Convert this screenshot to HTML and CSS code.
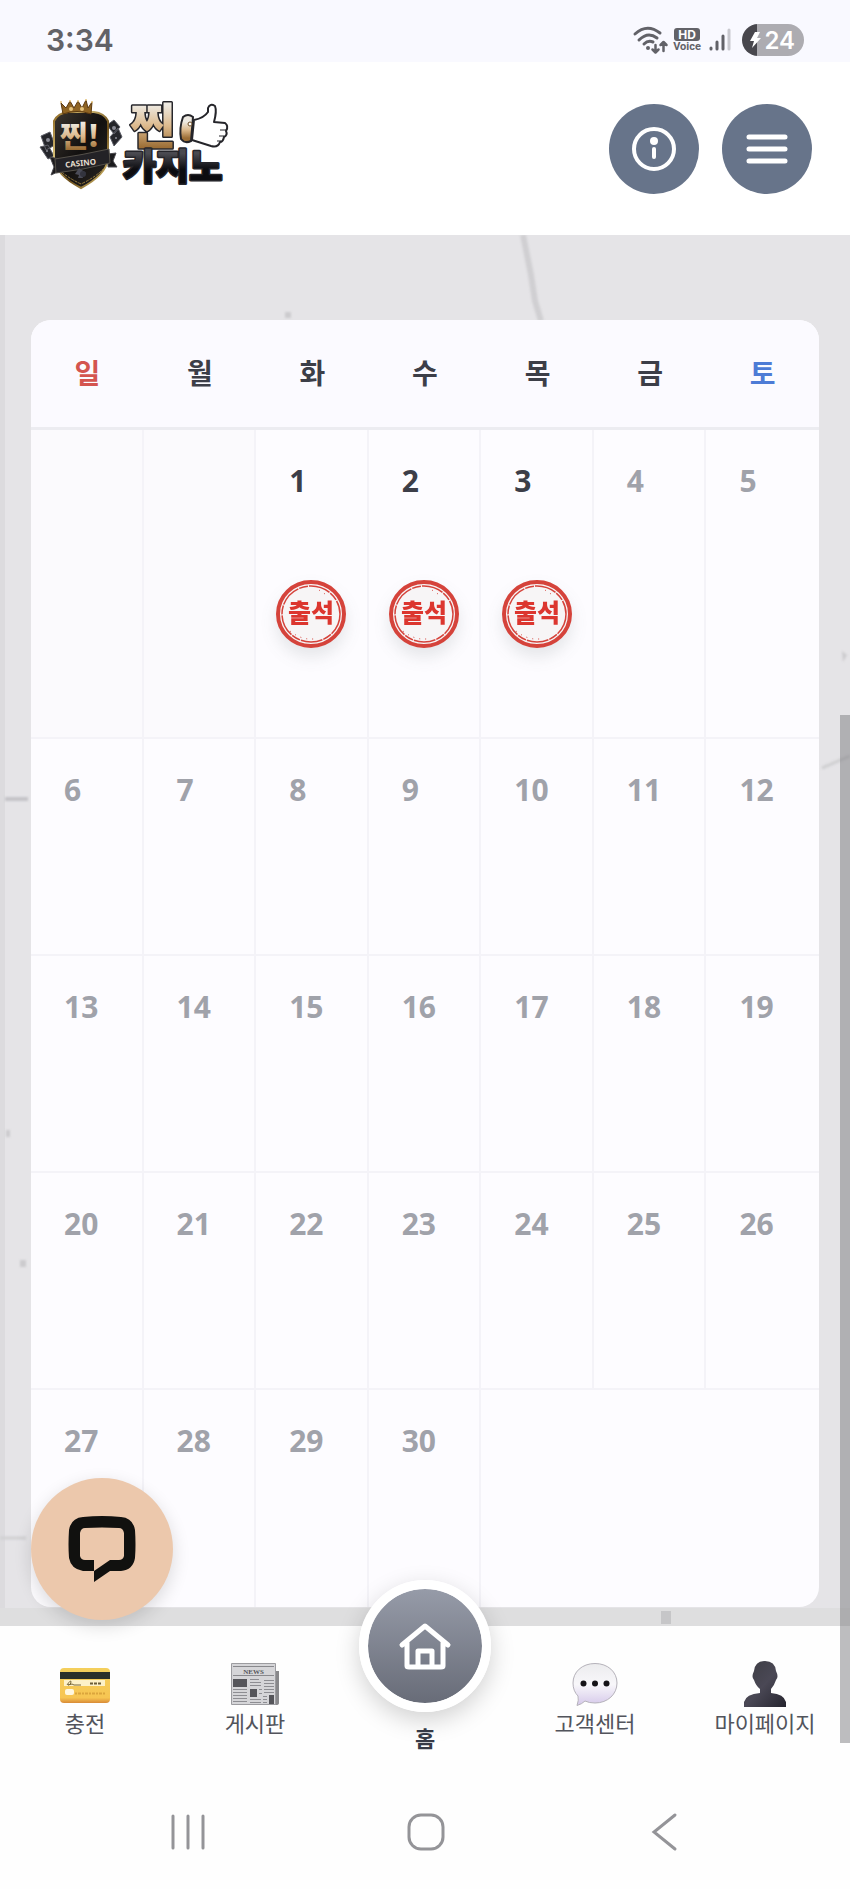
FILE: index.html
```html
<!DOCTYPE html>
<html lang="ko">
<head>
<meta charset="utf-8">
<meta name="viewport" content="width=device-width, initial-scale=1">
<title>출석 달력</title>
<link rel="stylesheet" href="styles.css">
</head>
<body>
<div class="status">
  <span class="clock">3:34</span>
  <div class="status-icons">
    <svg class="wifi" width="34" height="28" viewBox="0 0 34 28" fill="none" stroke="#626268" stroke-width="3" stroke-linecap="round" stroke-linejoin="round" aria-hidden="true">
      <path d="M2 8Q14-3 27 7M6 14Q15 5 24 12M11 18Q15 14 20 16"/>
      <circle cx="15" cy="22" r="2" fill="#626268" stroke="none"/>
      <path stroke-width="2.500" d="M22.500 19v7M19.500 23.500l3 3 3-3M30.500 25v-8M27.500 19l3-3 3 3"/>
    </svg>
    <span class="voice"><b>HD</b><small>Voice</small></span>
    <svg class="signal" width="22" height="24" viewBox="0 0 22 24" stroke-width="3" stroke-linecap="round" stroke="#626268" aria-hidden="true">
      <path d="M2 20v1M8 14v7M14 8v13"/><path stroke="#c9c9cf" d="M20 2v19"/>
    </svg>
    <span class="battery">
      <svg width="12" height="18" viewBox="0 0 12 18" aria-hidden="true"><path fill="#fff" d="M6 1h5L8 7h4L3 17l2-7H1z"/></svg>
      <span>24</span>
    </span>
  </div>
</div>

<header class="header">
  <a href="#" class="logo" aria-label="찐 카지노">
    <svg width="190" height="104" viewBox="0 0 190 104">
      <defs>
        <linearGradient id="gold" x1="0" y1="0" x2="0" y2="1"><stop offset="0.250" stop-color="#eeeae2"/><stop offset="0.550" stop-color="#dcb98c"/><stop offset="0.850" stop-color="#9c6e36"/></linearGradient>
        <linearGradient id="rim" x1="0" y1="0" x2="1" y2="1"><stop offset="0" stop-color="#8a641f"/><stop offset="0.300" stop-color="#d9c27a"/><stop offset="0.600" stop-color="#6a4c18"/><stop offset="1" stop-color="#e9cf7c"/></linearGradient>
        <linearGradient id="body" x1="0" y1="0" x2="1" y2="1"><stop offset="0" stop-color="#3c3630"/><stop offset="0.500" stop-color="#12100f"/><stop offset="1" stop-color="#2b2724"/></linearGradient>
        <linearGradient id="coal" x1="0" y1="0" x2="0" y2="1"><stop offset="0.300" stop-color="#4a4a50"/><stop offset="0.600" stop-color="#0c0c10"/></linearGradient>
      </defs>
      <g fill="#25262b" stroke="#5c5d66" stroke-width="1">
        <path d="M1 39l9-4 5 13-9 5zM0 50l8-2 6 11-6 3z"/>
        <path d="M67 28l7-5 6 7-6 7zM70 40l8-9 4 9-8 9z"/>
      </g>
      <g fill="#8b8c96"><circle cx="8" cy="43" r="2"/><circle cx="7" cy="54" r="1"/><circle cx="74" cy="31" r="2"/><circle cx="76" cy="41" r="1"/></g>
      <path fill="url(#body)" stroke="url(#rim)" stroke-width="2" d="M14 24Q18 16 28 15H54Q64 16 68 24V62Q66 78 41 91Q16 78 14 62z"/>
      <path fill="none" stroke="#a1833f" stroke-width="1" stroke-dasharray="3 1" d="M19 72Q26 80 41 87Q56 80 63 72"/>
      <path fill="#8f6423" stroke="#5b3910" stroke-width="1" d="M23 17L21 6l5 5 4-7 4 7 4-7 4 7 4-8 2 8 4-6-1 12Q37 12 23 17z"/>
      <g fill="#e6c47c"><circle cx="21" cy="5" r="1"/><circle cx="30" cy="4" r="1"/><circle cx="38" cy="4" r="1"/><circle cx="46" cy="3" r="1"/><circle cx="52" cy="5" r="1"/><circle cx="31" cy="12" r="2"/><circle cx="42" cy="12" r="2"/></g>
      <text class="mark" x="20" y="50" font-size="30" fill="url(#gold)">찐!</text>
      <path fill="#1b1a1c" stroke="#4a494e" stroke-width="1" d="M10 60l9 2 1 12-9 4 3-8zM76 56l-8 1 0 13 9 0-4-6z"/>
      <path fill="#232226" stroke="#55514a" stroke-width="1" d="M15 62Q42 58 69 52L70 66Q43 73 16 76z"/>
      <text class="casino" x="25" y="69" font-size="8" fill="#e5ddcf" transform="rotate(-6 41 66)">CASINO</text>
      <path fill="#4b4c58" d="M39 71l-4 6 4 1-1 3h5l-1-3 4-2z"/>
      <circle cx="43" cy="77" r="3" fill="#33343e"/>
      <g stroke="#25252a" stroke-width="3" paint-order="stroke" stroke-linejoin="round">
        <text class="mark" x="90" y="47" font-size="49" fill="url(#gold)">찐</text>
        <text class="mark" x="83" y="83" font-size="36" fill="url(#coal)">카지노</text>
      </g>
      <path fill="url(#gold)" stroke="#25252a" stroke-width="2" d="M143 20Q148 16 153 20L151 44Q145 47 141 42Q139 31 143 20z"/>
      <circle cx="150" cy="27" r="2" fill="#fff" stroke="#6b4b25"/>
      <path fill="#fff" stroke="#25252a" stroke-width="2" stroke-linejoin="round" d="M154 23Q164 21 168 15L168 11Q170 6 175 9Q177 14 174 25L185 26Q189 29 186 34Q188 38 184 40Q183 45 180 45Q178 51 171 49L152 43z"/>
      <path fill="none" stroke="#25252a" stroke-width="1" d="M180 33h6M179 39h5M177 44h4"/>
    </svg>
  </a>
  <div class="header-actions">
    <button class="round" type="button" aria-label="안내">
      <svg width="44" height="44" viewBox="0 0 44 44" fill="none" stroke="#fff" stroke-width="4" stroke-linecap="round"><circle cx="22" cy="22" r="20"/><path d="M22 22v8"/><circle cx="22" cy="14" r="4" fill="#fff" stroke="none"/></svg>
    </button>
    <button class="round" type="button" aria-label="메뉴">
      <svg width="44" height="44" viewBox="0 0 44 44" fill="none" stroke="#fff" stroke-width="5" stroke-linecap="round"><path d="M4 10h36M4 22h36M4 34h36"/></svg>
    </button>
  </div>
</header>

<main class="main">
  <svg class="marble" viewBox="0 0 850 1392" preserveAspectRatio="xMidYMin slice" fill="none" aria-hidden="true">
    <path fill="#dcdbde" d="M0 0H5V1392H0z"/>
    <path fill="#dededf" d="M0 1373H850V1392H0z"/>
    <g class="veins">
      <path stroke="#d0cfd2" stroke-width="6" d="M523 0L527 20L531 40L535 66L541 86"/>
      <path stroke="#c4c3c8" stroke-width="4" d="M5 564H28"/>
      <path stroke="#d0d0d2" stroke-width="3" d="M0 1303H26M822 533L850 521"/>
      <path fill="#cccbce" d="M285 77h6v6h-6zM842 416l5 4-4 7zM20 1025h6v7h-6zM6 895h4v7h-4z"/>
    </g>
    <path fill="#c6c6c8" d="M661 1376h10v13h-10z"/>
  </svg>
  <section class="card">
    <table class="calendar">
      <thead>
        <tr><th class="sun" scope="col">일</th><th scope="col">월</th><th scope="col">화</th><th scope="col">수</th><th scope="col">목</th><th scope="col">금</th><th class="sat" scope="col">토</th></tr>
      </thead>
      <tbody>
        <tr class="tall">
          <td class="empty"></td><td class="empty"></td>
          <td class="done"><span>1</span><svg class="stamp" width="72" height="70" viewBox="0 0 72 70"><use href="#seal"/><text x="36" y="43">출석</text></svg></td>
          <td class="done"><span>2</span><svg class="stamp" width="72" height="70" viewBox="0 0 72 70"><use href="#seal"/><text x="36" y="43">출석</text></svg></td>
          <td class="done"><span>3</span><svg class="stamp" width="72" height="70" viewBox="0 0 72 70"><use href="#seal"/><text x="36" y="43">출석</text></svg></td>
          <td>4</td><td>5</td>
        </tr>
        <tr><td>6</td><td>7</td><td>8</td><td>9</td><td>10</td><td>11</td><td>12</td></tr>
        <tr><td>13</td><td>14</td><td>15</td><td>16</td><td>17</td><td>18</td><td>19</td></tr>
        <tr><td>20</td><td>21</td><td>22</td><td>23</td><td>24</td><td>25</td><td>26</td></tr>
        <tr><td>27</td><td>28</td><td>29</td><td>30</td><td colspan="3"></td></tr>
      </tbody>
    </table>
  </section>
  <button class="chat" type="button" aria-label="채팅 상담">
    <svg width="66" height="66" viewBox="0 0 66 66"><path fill="#11110f" fill-rule="evenodd" d="M14 1Q33-1 52 1Q64 2 66 14Q67 29 66 42Q64 54 52 55H41L25 66V55H14Q2 53 0 42Q-1 29 0 14Q2 2 14 1zM16 12Q12 12 11 17V40Q12 44 16 44H25V55L41 44H50Q54 44 55 40V17Q54 12 50 12Q33 11 16 12z"/></svg>
  </button>
</main>

<nav class="tabs" aria-label="하단 메뉴">
  <a class="tab" href="#">
    <svg width="50" height="48" viewBox="0 0 50 48" aria-hidden="true">
      <defs><linearGradient id="yellow" x1="0" y1="0" x2="0" y2="1"><stop offset="0" stop-color="#f4cf5c"/><stop offset="0.850" stop-color="#f7c552"/><stop offset="1" stop-color="#d88a36"/></linearGradient></defs>
      <rect y="8" width="50" height="35" rx="4" fill="url(#yellow)"/><path fill="#2b3029" d="M0 12h50v7H0z"/>
      <path fill="#fdf1c8" d="M4 20h41v6H4z"/><path fill="none" stroke="#77673a" d="M7 25q4-6 4-3t-3 3q5-2 6 0h7"/><path stroke="#6c5e3b" stroke-width="2" stroke-dasharray="3 1" d="M30 23.500h12"/>
      <rect x="5" y="29" width="9" height="6" rx="2" fill="#fff7df"/><path stroke="#dba53d" stroke-width="2" stroke-dasharray="2 1 3 1" d="M15 33.500h31"/>
    </svg>
    <span>충전</span>
  </a>
  <a class="tab" href="#">
    <svg width="50" height="48" viewBox="0 0 50 48" aria-hidden="true">
      <path fill="#88888b" d="M40 11h9v32q0 2-3 2H36z"/><path fill="#d5d5d8" stroke="#9c9ca0" d="M1.500 3.500h44v41h-44z"/>
      <path stroke="#88888c" d="M3 6.500h41M3 15.500h41"/>
      <text class="news" x="23.500" y="14">NEWS</text>
      <path fill="#55555a" d="M3 19h14v8H3zM20 29h7v8h-7zM39 35h5v9h-5z"/>
      <path stroke="#8d8d92" d="M3 29.500h14M3 32.500h14M3 35.500h14M3 38.500h14M3 41.500h14M20 19.500h9M20 22.500h11M20 25.500h11M29 29.500h3M29 33.500h3M20 39.500h11M20 42.500h11M34 20.500h10M34 23.500h10M34 26.500h10M34 29.500h10M34 32.500h10M33 36.500h4M33 39.500h4M33 42.500h4"/>
    </svg>
    <span>게시판</span>
  </a>
  <a class="tab home" href="#" aria-current="page">
    <span class="home-disc">
      <svg width="52" height="48" viewBox="0 0 52 48" fill="none" stroke="#fff" stroke-width="5" stroke-linecap="round" stroke-linejoin="round" aria-hidden="true"><path d="M3 23L26 4L49 23M8 21V44Q8 45 10 45H42Q44 45 44 44V21M19 44V29H33V44"/></svg>
    </span>
    <span>홈</span>
  </a>
  <a class="tab" href="#">
    <svg width="50" height="48" viewBox="0 0 50 48" aria-hidden="true">
      <defs><linearGradient id="bubble" x1="0" y1="0" x2="0" y2="1"><stop offset="0" stop-color="#ececee"/><stop offset="0.500" stop-color="#f8f7fa"/><stop offset="1" stop-color="#d5c8ea"/></linearGradient></defs>
      <path fill="url(#bubble)" stroke="#b5b2ba" d="M25 3.500C38 3.500 47 12 47 23S38 43 25 43Q19 43 15 41Q12 44 7 45.500Q9 40 8 36Q3 31 3 23C3 12 12 3.500 25 3.500z"/>
      <g fill="#151418"><circle cx="13.500" cy="23.500" r="3"/><circle cx="25" cy="23.500" r="3"/><circle cx="36.500" cy="23.500" r="3"/></g>
    </svg>
    <span>고객센터</span>
  </a>
  <a class="tab" href="#">
    <svg width="50" height="48" viewBox="0 0 50 48" aria-hidden="true">
      <defs><linearGradient id="bust" x1="0" y1="0" x2="1" y2="1"><stop offset="0" stop-color="#3c3c42"/><stop offset="0.500" stop-color="#4a4855"/><stop offset="1" stop-color="#25242e"/></linearGradient></defs>
      <path fill="url(#bust)" d="M25 1Q35 1 36 11Q39 17 36 20Q34 26 31 29V33Q44 34 46 42V47H4V42Q6 34 20 33V29Q16 26 14 20Q11 17 14 11Q15 1 25 1z"/>
    </svg>
    <span>마이페이지</span>
  </a>
</nav>

<div class="system">
  <button type="button" aria-label="최근 앱"><svg width="38" height="38" viewBox="0 0 38 38"><path d="M4 3v32M19 3v32M34 3v32"/></svg></button>
  <button type="button" aria-label="홈 화면"><svg width="38" height="38" viewBox="0 0 38 38"><rect x="2" y="2" width="34" height="34" rx="12"/></svg></button>
  <button type="button" aria-label="뒤로"><svg width="38" height="38" viewBox="0 0 38 38"><path d="M30 2L9 19L30 36"/></svg></button>
</div>
<div class="thumb"></div>

<svg class="defs" width="0" height="0" aria-hidden="true">
  <defs>
    <g id="seal">
      <ellipse cx="36" cy="35" rx="33" ry="32" fill="#f7f5f6" stroke="#d5433b" stroke-width="4"/>
      <ellipse cx="36" cy="35" rx="29" ry="28" fill="none" stroke="#d5433b" stroke-width="1.500" stroke-dasharray="22 1 9 1"/>
      <path stroke="#d5433b" stroke-width="1" stroke-dasharray="1 5" fill="none" d="M44 11l9 6M15 52q10 8 20 8h6"/>
    </g>
  </defs>
</svg>
</body>
</html>
```
FILE: styles.css
```css
* { box-sizing: border-box; }

body {
  position: relative;
  display: flex;
  flex-direction: column;
  min-height: 100vh;
  margin: 0;
  background: #fefefe;
  color: #3c3e48;
  font-family: "Noto Sans", "Noto Sans CJK KR", sans-serif;
}

button {
  display: flex;
  align-items: center;
  justify-content: center;
  padding: 0;
  border: 0;
  background: none;
  cursor: pointer;
}

a { color: inherit; text-decoration: none; }
svg { display: block; flex: none; overflow: visible; }
.defs { position: absolute; }

/* Status bar */
.status {
  display: flex;
  align-items: center;
  justify-content: space-between;
  height: 62px;
  padding: 18px 46px 0;
  background: #f9f9ff;
  color: #626268;
  font-family: Inter, sans-serif;
}
.clock { font-size: 30px; font-weight: 600; line-height: 40px; }
.status-icons { display: flex; align-items: center; gap: 7px; }
.voice {
  display: flex;
  flex-direction: column;
  align-items: center;
  width: 26px;
}
.voice b {
  width: 26px;
  border-radius: 3px;
  background: #626268;
  color: #fff;
  font-size: 12px;
  line-height: 13px;
  text-align: center;
}
.voice small { font: 700 11px/12px Roboto, sans-serif; }
.battery {
  display: flex;
  align-items: center;
  justify-content: space-between;
  width: 62px;
  height: 32px;
  margin-left: 4px;
  padding: 0 9px 0 7px;
  border-radius: 16px;
  background: linear-gradient(90deg, #48474d 15px, #adacb1 15px);
  color: #fff;
  font-size: 24px;
  font-weight: 600;
}
.signal { margin-left: 2px; }

/* Header */
.header {
  display: flex;
  align-items: center;
  justify-content: space-between;
  height: 173px;
  padding: 0 38px 0 40px;
  background: #fff;
}
.mark { font-family: "Noto Sans CJK KR", sans-serif; font-weight: 900; }
.casino { font-family: "Noto Sans", sans-serif; font-weight: 700; }
.header-actions { display: flex; gap: 23px; }
.round {
  width: 90px;
  height: 90px;
  border-radius: 50%;
  background: #67748a;
}

/* Calendar */
.main {
  position: relative;
  padding: 85px 31px 19px;
  background: #e5e4e7;
}
.marble {
  position: absolute;
  inset: 0;
  width: 100%;
  height: 100%;
  overflow: hidden;
}
.veins { filter: blur(1px); }
.card {
  position: relative;
  overflow: hidden;
  border-radius: 20px;
  background: #fdfcff;
}
.calendar {
  width: 100%;
  table-layout: fixed;
  border-collapse: separate;
  border-spacing: 0;
}
.calendar th {
  height: 110px;
  padding: 0 0 4px;
  border-bottom: 3px solid #ececf1;
  background: #fbfaff;
  font-size: 28px;
  font-weight: 700;
  font-family: "Noto Sans CJK KR", sans-serif;
  line-height: 40px;
}
.calendar .sun { color: #d4544f; }
.calendar .sat { color: #4d7bd6; }
.calendar td {
  height: 217px;
  padding: 31px 0 0 33px;
  border-right: 2px solid #f4f3f8;
  border-bottom: 2px solid #f4f3f8;
  color: #a0a2aa;
  font-size: 30px;
  font-weight: 700;
  line-height: 40px;
  vertical-align: top;
}
.calendar td:last-child { border-right: 0; }
.calendar tr:last-child td { border-bottom: 0; }
.calendar .tall td { height: 309px; }
.calendar .empty { background: #fbfafd; }
.calendar .done { padding-left: 0; color: #3c3e48; }
.done span { display: block; padding-left: 33px; }
.stamp {
  margin: 78px auto 0;
  filter: drop-shadow(0 9px 8px rgba(60, 70, 70, 0.12));
}
.stamp text {
  fill: #dc362f;
  font: 900 25px "Noto Sans CJK KR", sans-serif;
  text-anchor: middle;
}

/* Floating chat */
.chat {
  position: absolute;
  left: 31px;
  bottom: 6px;
  z-index: 3;
  width: 142px;
  height: 142px;
  border-radius: 50%;
  background: #ecc8ac;
  box-shadow: 0 6px 18px rgba(0, 0, 0, 0.14);
}

/* Bottom tabs */
.tabs {
  position: relative;
  z-index: 2;
  display: grid;
  grid-template-columns: repeat(5, 1fr);
  height: 116px;
  background: #fefefe;
}
.tab {
  display: flex;
  flex-direction: column;
  align-items: center;
  padding-top: 34px;
  color: #52545c;
  font-family: "Noto Sans CJK KR", sans-serif;
  font-size: 22px;
  line-height: 28px;
  white-space: nowrap;
}
.home {
  margin-top: -46px;
  padding-top: 0;
  gap: 11px;
  color: #363a46;
  font-weight: 700;
}
.home-disc {
  display: flex;
  align-items: center;
  justify-content: center;
  width: 132px;
  height: 132px;
  border: 9px solid #fff;
  border-radius: 50%;
  background: linear-gradient(#969ba8, #686c78) padding-box;
  box-shadow: 0 8px 24px rgba(0, 0, 0, 0.18);
}
.news {
  fill: #55555a;
  font: 700 7px "Liberation Serif", serif;
  text-anchor: middle;
}

/* System navigation */
.system {
  display: flex;
  flex: 1;
  align-items: center;
  justify-content: space-between;
  min-height: 146px;
  padding: 32px 167px 0 169px;
}
.system svg { fill: none; stroke: #949498; stroke-width: 3; stroke-linecap: round; }

.thumb {
  position: absolute;
  top: 715px;
  right: 0;
  z-index: 4;
  width: 10px;
  height: 1028px;
  background: rgba(120, 120, 124, 0.48);
}
```
